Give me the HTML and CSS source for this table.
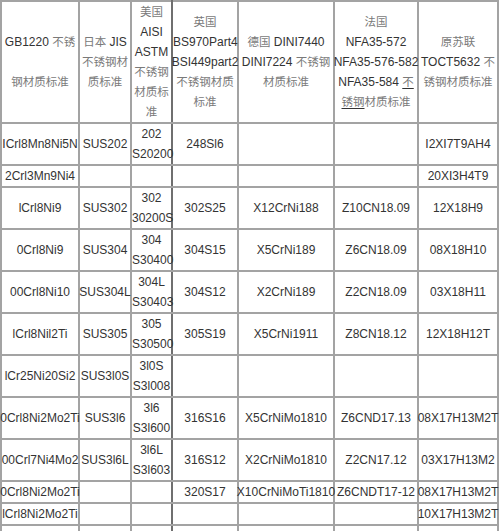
FILE: index.html
```html
<!DOCTYPE html>
<html>
<head>
<meta charset="utf-8">
<link rel="stylesheet" href="styles.css">
</head>
<body>
<table class="grid">
  <colgroup>
    <col class="w1"><col class="w2"><col class="w3"><col class="w4"><col class="w5"><col class="w6"><col class="w7">
  </colgroup>
  <tr class="head">
    <td>GB1220 <span class="zh">不锈</span><br><br><span class="zh">钢材质标准</span></td>
    <td><span class="zh">日本</span> JIS<br><span class="zh">不锈钢材</span><br><span class="zh">质标准</span></td>
    <td class="dk"><span class="zh">美国</span><br>AISI<br>ASTM<br><span class="zh">不锈钢</span><br><span class="zh">材质标</span><br><span class="zh">准</span></td>
    <td><span class="zh">英国</span><br>BS970Part4<br><span class="wide">BSI449part2</span><span class="zh">不锈钢材质</span><br><span class="zh">标准</span></td>
    <td><span class="zh">德国</span> DINI7440<br>DINI7224 <span class="zh">不锈钢</span><br><span class="zh">材质标准</span></td>
    <td><span class="zh">法国</span><br>NFA35-572<br><span class="wide">NFA35-576-582</span>NFA35-584 <span class="zh ul">不</span><br><span class="zh"><span class="ul">锈钢</span>材质标准</span></td>
    <td class="dl"><span class="zh">原苏联</span><br>TOCT5632 <span class="zh">不</span><br><span class="zh">锈钢材质标准</span></td>
  </tr>
  <tr>
    <td>ICrl8Mn8Ni5N</td><td>SUS202</td><td class="dk">202<br>S20200</td><td>248Sl6</td><td></td><td></td><td class="dl">I2XI7T9AH4</td>
  </tr>
  <tr>
    <td>2Crl3Mn9Ni4</td><td></td><td class="dk"></td><td></td><td></td><td></td><td class="dl">20XI3H4T9</td>
  </tr>
  <tr>
    <td>lCrl8Ni9</td><td>SUS302</td><td class="dk">302<br>30200S</td><td>302S25</td><td>X12CrNi188</td><td>Z10CN18.09</td><td class="dl">12X18H9</td>
  </tr>
  <tr>
    <td>0Crl8Ni9</td><td>SUS304</td><td class="dk">304<br>S30400</td><td>304S15</td><td>X5CrNi189</td><td>Z6CN18.09</td><td class="dl">08X18H10</td>
  </tr>
  <tr>
    <td>00Crl8Ni10</td><td><span class="wide">SUS304L</span></td><td class="dk">304L<br>S30403</td><td>304S12</td><td>X2CrNi189</td><td>Z2CN18.09</td><td class="dl">03X18H11</td>
  </tr>
  <tr>
    <td>lCrl8Nil2Ti</td><td>SUS305</td><td class="dk">305<br>S30500</td><td>305S19</td><td>X5CrNi1911</td><td>Z8CN18.12</td><td class="dl">12X18H12T</td>
  </tr>
  <tr>
    <td>lCr25Ni20Si2</td><td>SUS3l0S</td><td class="dk">3l0S<br>S3l008</td><td></td><td></td><td></td><td class="dl"></td>
  </tr>
  <tr>
    <td><span class="wide">0Crl8Ni2Mo2Ti</span></td><td>SUS3l6</td><td class="dk">3l6<br>S3l600</td><td>316S16</td><td>X5CrNiMo1810</td><td>Z6CND17.13</td><td class="dl"><span class="wide">08X17H13M2T</span></td>
  </tr>
  <tr>
    <td><span class="wide">00Crl7Ni4Mo2</span></td><td>SUS3l6L</td><td class="dk">3l6L<br>S3l603</td><td>316S12</td><td>X2CrNiMo1810</td><td>Z2CN17.12</td><td class="dl">03X17H13M2</td>
  </tr>
  <tr>
    <td><span class="wide">0Crl8Ni2Mo2Ti</span></td><td></td><td class="dk"></td><td>320S17</td><td><span class="wide">X10CrNiMoTi1810</span></td><td><span class="wide">Z6CNDT17-12</span></td><td class="dl"><span class="wide">08X17H13M2T</span></td>
  </tr>
  <tr>
    <td>lCrl8Ni2Mo2Ti</td><td></td><td class="dk"></td><td></td><td></td><td></td><td class="dl"><span class="wide">10X17H13M2T</span></td>
  </tr>
  <tr>
    <td>00Crl9Nil3Mo3</td><td>SUS3l7L</td><td class="dk">3l7L<br>S3l703</td><td>3l7S12<br>3l7S13</td><td></td><td></td><td class="dl"></td>
  </tr>
</table>
</body>
</html>
```
FILE: styles.css
```css
html, body {
  margin: 0;
  padding: 0;
  background: #ffffff;
  overflow: hidden;
}

.grid {
  border-collapse: collapse;
  table-layout: fixed;
  width: 499px;
  font-family: "Liberation Sans", "Noto Sans CJK SC", sans-serif;
  font-size: 12px;
  line-height: 20px;
  color: #333333;
}

.w1 { width: 78px; }
.w2 { width: 52px; }
.w3 { width: 41px; }
.w4 { width: 66px; }
.w5 { width: 96px; }
.w6 { width: 84px; }
.w7 { width: 80px; }

.grid td {
  border: 2px solid #a3a3a3;
  padding: 0;
  text-align: center;
  vertical-align: middle;
  white-space: nowrap;
}

.grid td.dk {
  border-left-color: #6f6f6f;
  border-right-color: #6f6f6f;
}

.grid td.dl {
  border-left-color: #7a7a7a;
}

.zh {
  font-family: "Noto Sans CJK SC", sans-serif;
  font-size: 11.5px;
  line-height: 1;
  color: #7a7a7a;
}

.ul {
  text-decoration: underline;
  text-decoration-color: #333333;
  text-underline-offset: 2px;
}

.wide {
  display: block;
  margin: 0 -14px;
}
```
